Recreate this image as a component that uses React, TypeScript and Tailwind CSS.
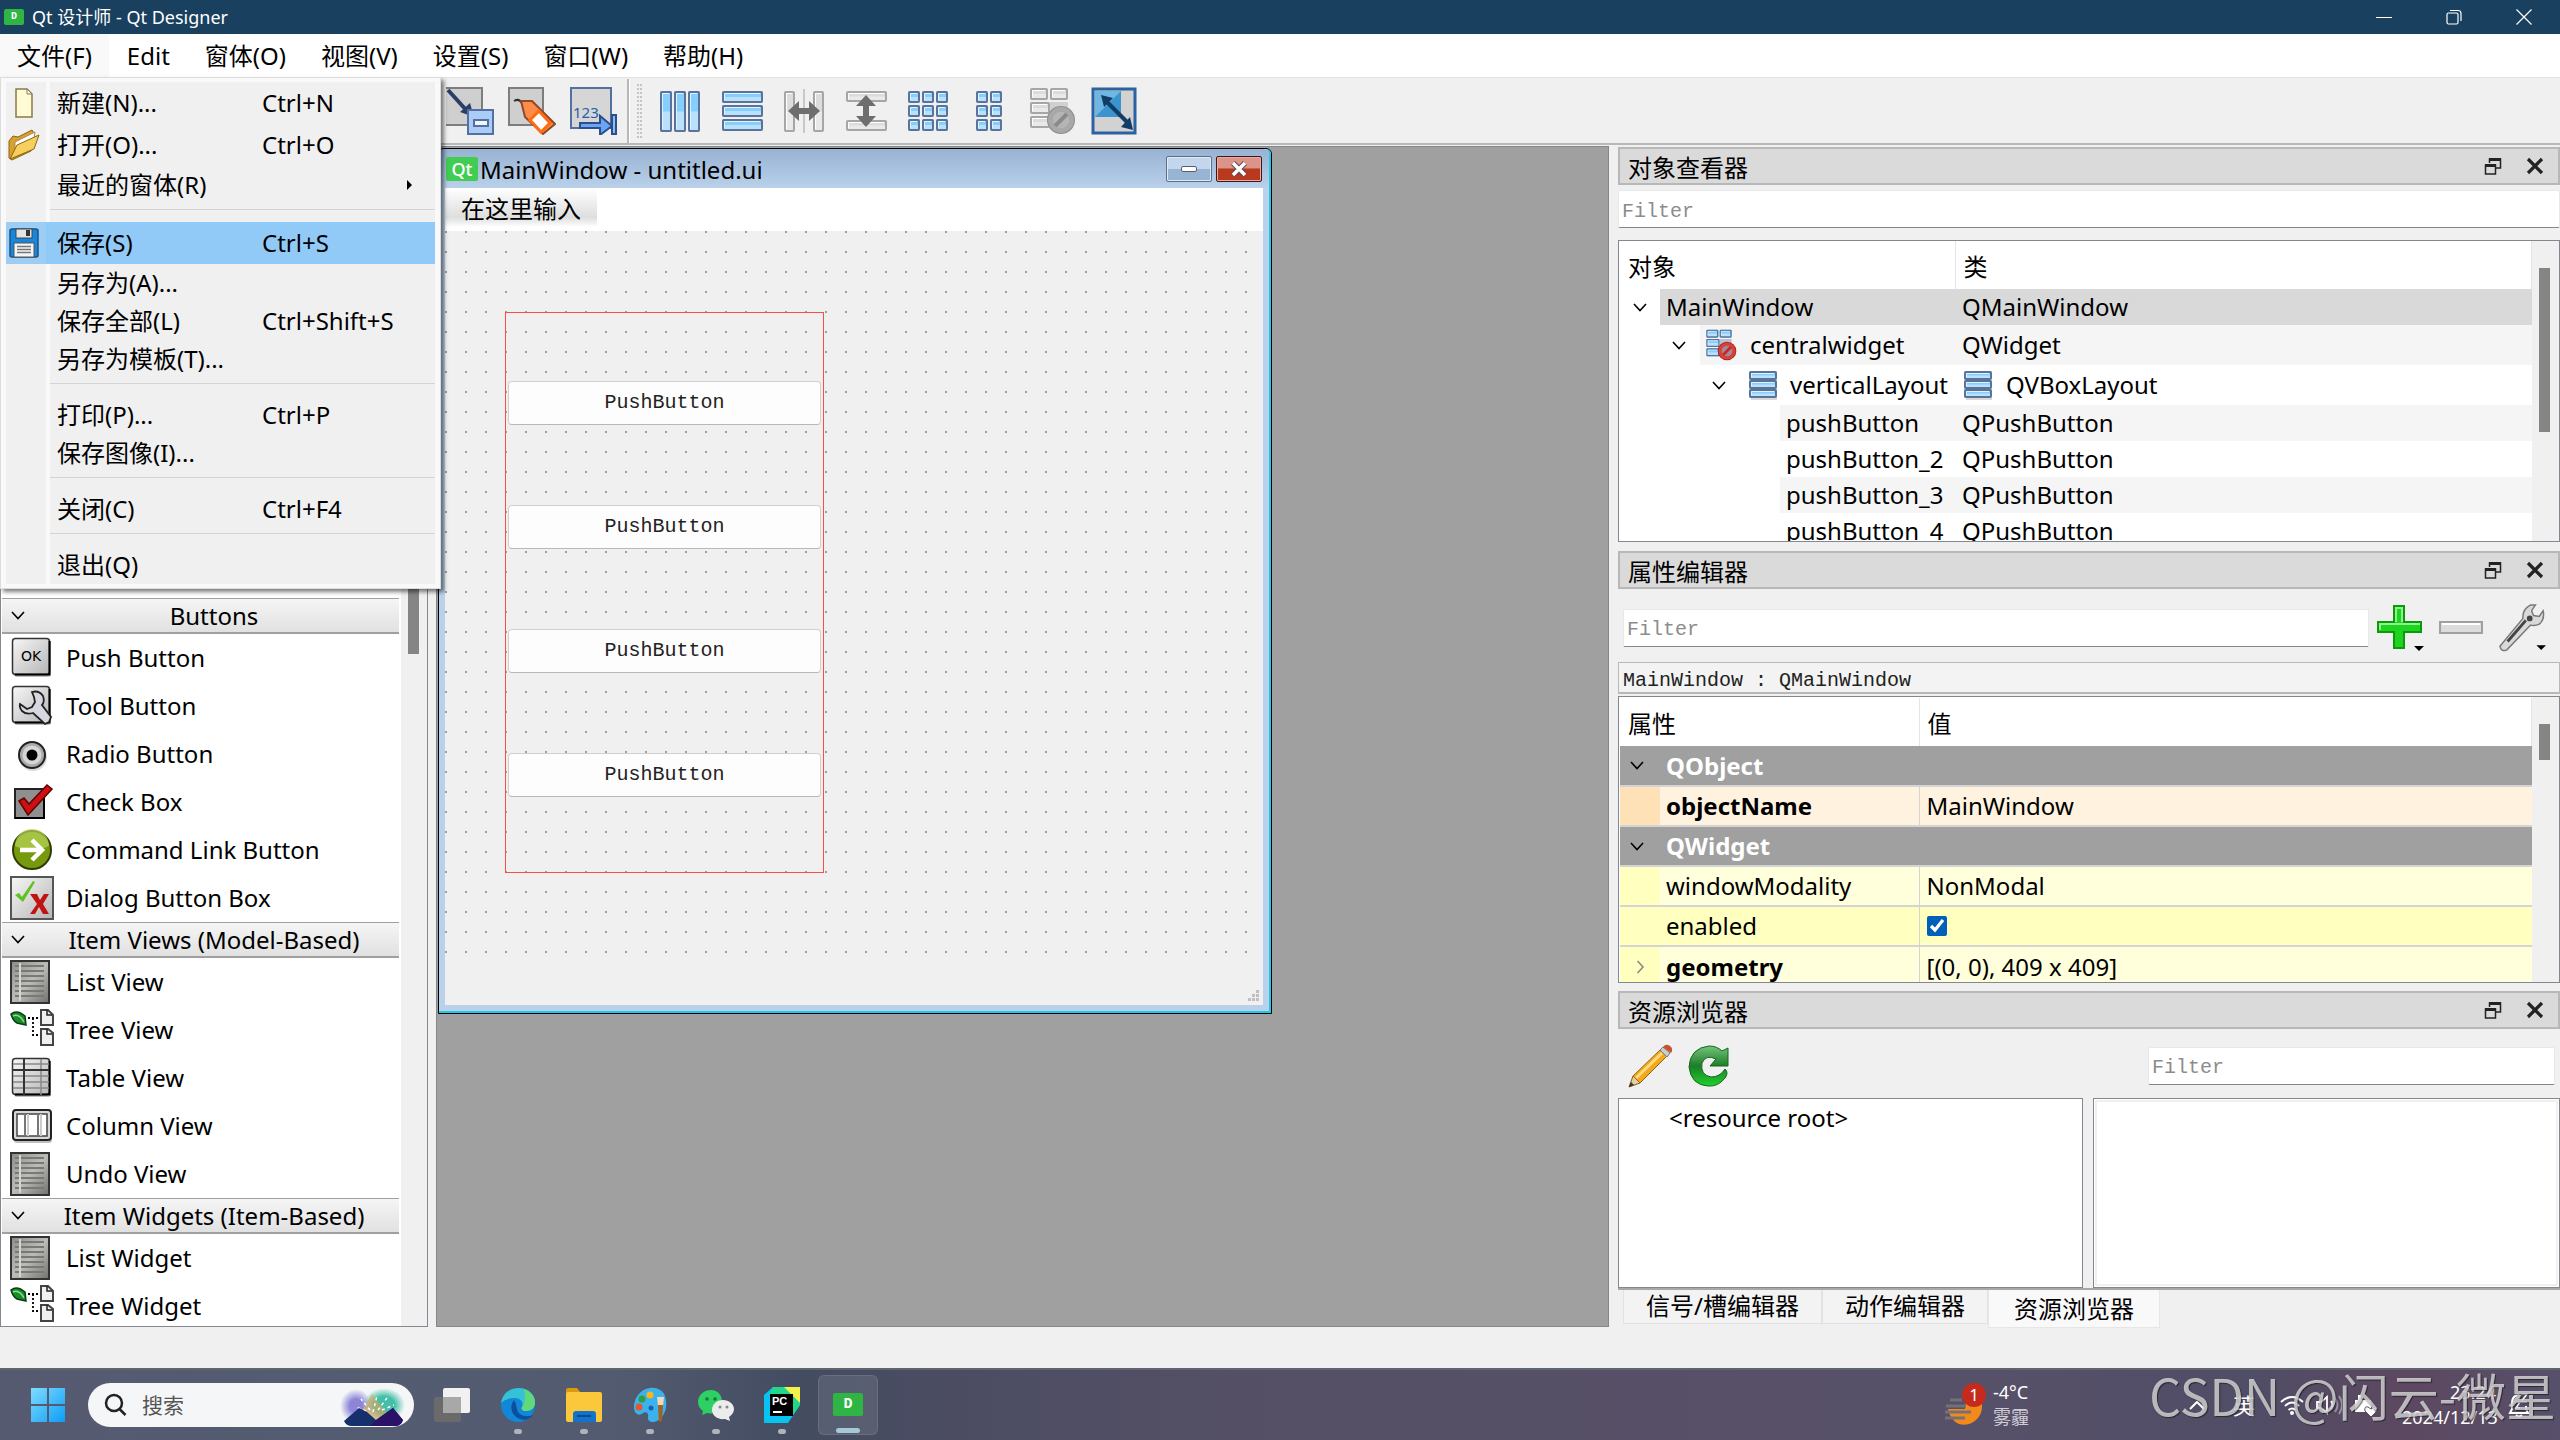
import { useState } from "react";
import type { ReactNode } from "react";

/* ---------- icons ---------- */

function Chevron({ className = "" }: { className?: string }) {
  return (
    <svg viewBox="0 0 14 9" className={`h-[9px] w-[14px] ${className}`} fill="none">
      <path d="M1 1l6 6.5L13 1" stroke="currentColor" strokeWidth="1.6" />
    </svg>
  );
}

function ChevronRight() {
  return (
    <svg viewBox="0 0 9 14" className="h-[14px] w-[9px]" fill="none">
      <path d="M1.5 1l5.5 6-5.5 6" stroke="#8a8a8a" strokeWidth="1.6" />
    </svg>
  );
}

interface BarProps {
  x: number;
  y: number;
  w: number;
  h: number;
  gray?: boolean;
}

function Bar({ x, y, w, h, gray }: BarProps) {
  return (
    <>
      <rect x={x} y={y} width={w} height={h} rx="1.5" fill={gray ? "#dcdcdc" : "#86cffc"} />
      <rect x={x} y={y + h / 2} width={w} height={h / 2} fill={gray ? "#e9e9e9" : "#b9e1fb"} />
      <rect x={x + 1} y={y + 1} width={w - 2} height={h - 2} rx="1" fill="none" stroke={gray ? "#a6a6a6" : "#5b7399"} strokeWidth="2" />
      <path d={`M${x + 2.5} ${y + h - 3}V${y + 2.5}H${x + w - 3}`} stroke={gray ? "#fff" : "#dff2ff"} strokeWidth="1" fill="none" />
    </>
  );
}

function Forbidden({ cx, cy, r, gray }: { cx: number; cy: number; r: number; gray?: boolean }) {
  const k = r * 0.42;
  return (
    <>
      <circle cx={cx} cy={cy} r={r} fill={gray ? "#8f8f8f" : "#a81c18"} />
      <circle cx={cx} cy={cy} r={r * 0.62} fill={gray ? "#b5b5b5" : "#a58a96"} />
      <circle cx={cx} cy={cy} r={r * 0.76} fill="none" stroke={gray ? "#a8a8a8" : "#d8403a"} strokeWidth={r * 0.32} />
      <path d={`M${cx - k} ${cy + k}L${cx + k} ${cy - k}`} stroke={gray ? "#8a8a8a" : "#c22a26"} strokeWidth={r * 0.3} />
    </>
  );
}

function VBoxIcon({ className = "size-8" }: { className?: string }) {
  return (
    <svg viewBox="0 0 32 32" className={className}>
      <rect x="4" y="28" width="26" height="3" fill="#000" opacity=".15" />
      <Bar x={2} y={2} w={28} h={9} />
      <Bar x={2} y={11} w={28} h={9} />
      <Bar x={2} y={20} w={28} h={9} />
    </svg>
  );
}

function BreakLayoutIcon({ className = "size-12", gray }: { className?: string; gray?: boolean }) {
  return (
    <svg viewBox="0 0 48 48" className={className}>
      <Bar x={2} y={1} w={18} h={12} gray={gray} />
      <Bar x={22} y={1} w={18} h={12} gray={gray} />
      <Bar x={2} y={15} w={20} h={12} gray={gray} />
      <Bar x={2} y={29} w={20} h={12} gray={gray} />
      <rect x="22" y="15" width="18" height="12" fill={gray ? "#d0d0d0" : "#b9c3d6"} />
      <Forbidden cx={33} cy={33} r={14} gray={gray} />
    </svg>
  );
}

const toolbarEdit: { name: string; icon: ReactNode }[] = [
  {
    name: "Edit Signals/Slots",
    icon: (
      <>
        <rect x="-6" y="1" width="42" height="37" fill="#cfcfcf" stroke="#7d7d7d" strokeWidth="2" />
        <path d="M2 3l20 22" stroke="#2b3f66" strokeWidth="4" />
        <path d="M28 30l-14-5 10-9z" fill="#2b3f66" />
        <rect x="22" y="23" width="25" height="24" fill="#a9cdf8" stroke="#54709f" strokeWidth="2" />
        <rect x="28" y="33" width="14" height="6" fill="#eef6ff" stroke="#54709f" strokeWidth="2" />
      </>
    ),
  },
  {
    name: "Edit Buddies",
    icon: (
      <>
        <rect x="1" y="1" width="34" height="37" fill="#cfcfcf" stroke="#7d7d7d" strokeWidth="2" />
        <path d="M6 14q5-3 8 2t3 10" fill="none" stroke="#333" strokeWidth="2" />
        <path d="M13 14h11l23 23-12 10-18-17z" fill="#ff8b4a" stroke="#8d4a24" strokeWidth="2" />
        <path d="M31 24l11 12-9 9-11-12z" fill="#fff" stroke="#ff6a13" strokeWidth="3" />
      </>
    ),
  },
  {
    name: "Edit Tab Order",
    icon: (
      <>
        <rect x="1" y="1" width="40" height="40" fill="#d6d6d6" stroke="#54709f" strokeWidth="2" />
        <text x="3" y="31" fontSize="15" fill="#1f5fae" fontFamily="Noto Sans">
          123
        </text>
        <path d="M10 36h20v-7l12 10-12 9v-7H10z" fill="#6ba4f2" stroke="#2a4f8c" strokeWidth="2" />
        <rect x="42" y="28" width="4" height="19" fill="#8dbcf8" stroke="#2a4f8c" strokeWidth="2" />
      </>
    ),
  },
];

const toolbarLayout: { name: string; icon: ReactNode }[] = [
  {
    name: "Lay Out Horizontally",
    icon: (
      <>
        <Bar x={4} y={4} w={12} h={41} />
        <Bar x={18} y={4} w={12} h={41} />
        <Bar x={32} y={4} w={12} h={41} />
      </>
    ),
  },
  {
    name: "Lay Out Vertically",
    icon: (
      <>
        <Bar x={4} y={4} w={41} h={12} />
        <Bar x={4} y={18} w={41} h={12} />
        <Bar x={4} y={32} w={41} h={12} />
      </>
    ),
  },
  {
    name: "Lay Out Horizontally in Splitter",
    icon: (
      <>
        <Bar x={4} y={4} w={11} h={41} gray />
        <Bar x={33} y={4} w={11} h={41} gray />
        <path d="M24 2v44" stroke="#c8c8c8" strokeWidth="2" />
        <path d="M8 24l11-10v7h10v-7l11 10-11 10v-7H19v7z" fill="#6e6e6e" />
      </>
    ),
  },
  {
    name: "Lay Out Vertically in Splitter",
    icon: (
      <>
        <Bar x={4} y={4} w={41} h={11} gray />
        <Bar x={4} y={33} w={41} h={11} gray />
        <path d="M24 8l10 11h-7v10h7L24 40 14 29h7V19h-7z" fill="#6e6e6e" />
      </>
    ),
  },
  {
    name: "Lay Out in a Grid",
    icon: (
      <>
        {[4, 18, 32].map((y) =>
          [4, 18, 32].map((x) => <Bar key={`${x}-${y}`} x={x} y={y} w={12} h={12} />),
        )}
      </>
    ),
  },
  {
    name: "Lay Out in a Form Layout",
    icon: (
      <>
        {[4, 18, 32].map((y) =>
          [10, 24].map((x) => <Bar key={`${x}-${y}`} x={x} y={y} w={12} h={12} />),
        )}
      </>
    ),
  },
  { name: "Break Layout", icon: <BreakLayoutIcon gray /> },
  {
    name: "Adjust Size",
    icon: (
      <>
        <rect x="3" y="2" width="42" height="44" fill="#d2d2d2" stroke="#2b62a0" strokeWidth="3" />
        <rect x="5" y="4" width="26" height="26" fill="#3c94cf" />
        <path d="M5 30L31 4H5z" fill="#6fb6e2" />
        <path d="M16 14l22 22" stroke="#123d66" strokeWidth="4" />
        <path d="M11 8l12 3-9 9zM43 43l-12-3 9-10z" fill="#123d66" />
      </>
    ),
  },
];

function FloppyIcon() {
  return (
    <svg viewBox="0 0 32 32" className="size-8">
      <rect x="2" y="2" width="28" height="28" rx="2" fill="#1787dd" stroke="#23527c" strokeWidth="1.5" />
      <rect x="8" y="2" width="16" height="9" fill="#e4e4e4" stroke="#444" />
      <rect x="18" y="3" width="4" height="6" fill="#333" />
      <rect x="6" y="16" width="20" height="14" fill="#f5f5f5" stroke="#555" />
      <path d="M9 19.500h14M9 22.500h14M9 25.500h14" stroke="#777" strokeWidth="1.500" />
    </svg>
  );
}

function NewFileIcon() {
  return (
    <svg viewBox="0 0 32 32" className="size-8">
      <path d="M8 2h11l5 5v23H8z" fill="#fffbd5" stroke="#8c7a4a" strokeWidth="1.5" />
      <path d="M19 2v5h5z" fill="#fff" stroke="#8c7a4a" />
    </svg>
  );
}

function OpenIcon() {
  return (
    <svg viewBox="0 0 32 32" className="size-8">
      <path d="M1 12l4-5 5 1 14-7 2 3-3 18-19 9-3-2z" fill="#d9a02c" stroke="#8a6416" />
      <path d="M7 13L27 3l-2 14-18 10z" fill="#fff" stroke="#a68b4a" />
      <path d="M2 30L9 16 31 6l-5 14z" fill="#f6cf5d" stroke="#8a6416" />
    </svg>
  );
}

type WidgetIconName =
  | "push"
  | "tool"
  | "radio"
  | "check"
  | "link"
  | "dialog"
  | "list"
  | "tree"
  | "table"
  | "column";

const key = (
  <>
    <rect x="4" y="4" width="37" height="37" rx="3" fill="#000" opacity=".25" />
    <rect x="2.5" y="2.500" width="37" height="36" rx="3" fill="url(#keyFill)" stroke="#333" strokeWidth="1.500" />
    <path d="M39.500 5v33.500H5" stroke="#000" strokeWidth="2" fill="none" />
  </>
);

const widgetIcons: Record<WidgetIconName, ReactNode> = {
  push: (
    <>
      {key}
      <text x="21" y="25" textAnchor="middle" fontSize="14" fontWeight="500" fontFamily="DejaVu Sans">
        OK
      </text>
    </>
  ),
  tool: (
    <>
      {key}
      <path
        d="M22 8q7-2 11 4 2 6-1 9l9 12-2 5-4 2-12-11q-7 2-11-2-3-4-2-7l7 5 5-2 3-5-1-5z"
        fill="#d7d7df"
        stroke="#222"
        strokeWidth="1.800"
      />
    </>
  ),
  radio: (
    <>
      <circle cx="23" cy="25" r="14" fill="#000" opacity=".15" />
      <circle cx="22" cy="23" r="13" fill="#aaa" stroke="#222" strokeWidth="2" />
      <circle cx="22" cy="23" r="9.500" fill="#e8e8e8" opacity=".7" />
      <circle cx="22" cy="23" r="5.500" fill="#000" />
    </>
  ),
  check: (
    <>
      <rect x="5" y="9" width="29" height="29" fill="#8f8f8f" stroke="#222" strokeWidth="2" />
      <path d="M34 9v29H5" stroke="#000" strokeWidth="2" fill="none" />
      <path d="M9 21l5-3 5 6L37 5l5 4-24 26z" fill="#cf1010" stroke="#5c0505" strokeWidth="1.500" />
    </>
  ),
  link: (
    <>
      <circle cx="22" cy="22" r="19" fill="#76990d" stroke="#2f3d05" strokeWidth="2" />
      <path d="M5 18a17 17 0 0134 0q-17 8-34 0z" fill="#b8d65a" opacity=".7" />
      <path d="M10 22h20M22 12l10 10-10 10" stroke="#fff" strokeWidth="4.500" fill="none" />
    </>
  ),
  dialog: (
    <>
      <rect x="1" y="1" width="42" height="42" fill="url(#keyFill)" stroke="#555" strokeWidth="2" />
      <path d="M5 19l4-2 3 4L23 5l2 1-12 20z" fill="#5cc41c" />
      <path d="M20 18h7l3 6 4-6h5l-6 10 6 10h-6l-4-7-4 7h-5l7-10z" fill="#c01414" />
    </>
  ),
  list: (
    <>
      <rect x="1" y="1" width="38" height="42" fill="url(#listFill)" stroke="#333" strokeWidth="2" />
      <path d="M5 6h29M5 11h29M5 16h29M5 21h29M5 26h29M5 31h29M5 36h29" stroke="#777a74" strokeWidth="1.800" />
      <path d="M10 3v38" stroke="#d5d5d0" strokeWidth="2" />
    </>
  ),
  tree: (
    <>
      <path d="M1 6q6-5 14 2l1 9q-5-1-9-2-4-2-6-9z" fill="#1b8a2a" stroke="#0c3d12" strokeWidth="1.500" />
      <path d="M3 8q6-3 11 6" stroke="#8de08f" strokeWidth="1.500" fill="none" />
      <path d="M18 10h10M23 10v17h5" stroke="#000" strokeWidth="1.800" strokeDasharray="2 2" fill="none" />
      <path d="M31 2h7l5 5v10H31zM31 21h7l5 4v12H31z" fill="#f0f0f0" stroke="#444" strokeWidth="2" />
      <path d="M37 2v5h5M37 21v5h5" stroke="#222" strokeWidth="1.500" fill="none" />
    </>
  ),
  table: (
    <>
      {key}
      <path d="M3 8h36M3 20h36M3 26h36M3 32h36M31 3v36" stroke="#888" strokeWidth="1.500" />
      <path d="M14 3v36M3 14h36" stroke="#333" strokeWidth="2" />
    </>
  ),
  column: (
    <>
      <rect x="4" y="9" width="38" height="30" rx="3" fill="#000" opacity=".25" />
      <rect x="3" y="6" width="38" height="30" rx="3" fill="#d8d8d8" stroke="#222" strokeWidth="2" />
      <rect x="7" y="10" width="30" height="22" fill="#fff" stroke="#444" strokeWidth="1.500" />
      <path d="M15 10v22M28 10v22" stroke="#777" strokeWidth="2" />
      <path d="M18 10v22M31 10v22" stroke="#ccc" strokeWidth="2" />
    </>
  ),
};

/* ---------- data ---------- */

const menus = ["文件(F)", "Edit", "窗体(O)", "视图(V)", "设置(S)", "窗口(W)", "帮助(H)"];

type MenuEntry = "sep" | { label: string; keys?: string; icon?: ReactNode; sub?: boolean; tall?: boolean };

const fileMenu: MenuEntry[] = [
  { label: "新建(N)...", keys: "Ctrl+N", icon: <NewFileIcon />, tall: true },
  { label: "打开(O)...", keys: "Ctrl+O", icon: <OpenIcon />, tall: true },
  { label: "最近的窗体(R)", sub: true },
  "sep",
  { label: "保存(S)", keys: "Ctrl+S", icon: <FloppyIcon />, tall: true },
  { label: "另存为(A)..." },
  { label: "保存全部(L)", keys: "Ctrl+Shift+S" },
  { label: "另存为模板(T)..." },
  "sep",
  { label: "打印(P)...", keys: "Ctrl+P" },
  { label: "保存图像(I)..." },
  "sep",
  { label: "关闭(C)", keys: "Ctrl+F4" },
  "sep",
  { label: "退出(Q)" },
];

const widgetBox: { title: string; items: { name: string; icon: WidgetIconName }[] }[] = [
  {
    title: "Buttons",
    items: [
      { name: "Push Button", icon: "push" },
      { name: "Tool Button", icon: "tool" },
      { name: "Radio Button", icon: "radio" },
      { name: "Check Box", icon: "check" },
      { name: "Command Link Button", icon: "link" },
      { name: "Dialog Button Box", icon: "dialog" },
    ],
  },
  {
    title: "Item Views (Model-Based)",
    items: [
      { name: "List View", icon: "list" },
      { name: "Tree View", icon: "tree" },
      { name: "Table View", icon: "table" },
      { name: "Column View", icon: "column" },
      { name: "Undo View", icon: "list" },
    ],
  },
  {
    title: "Item Widgets (Item-Based)",
    items: [
      { name: "List Widget", icon: "list" },
      { name: "Tree Widget", icon: "tree" },
    ],
  },
];

/* ---------- shell ---------- */

function TitleBar() {
  return (
    <header className="flex h-[34px] shrink-0 items-center bg-[#19405f] pr-7 pl-1 text-white">
      <span className="flex h-4 w-5 items-center justify-center rounded-xs bg-[#2fb543] font-mono text-[10px] leading-4 font-bold">
        D
      </span>
      <h1 className="ml-2 flex-1 text-[18px] leading-6">Qt 设计师 - Qt Designer</h1>
      <div className="flex items-center gap-[54px]">
        <button type="button" aria-label="Minimize">
          <svg viewBox="0 0 16 16" className="size-4">
            <path d="M0 8.500h16" stroke="#fff" />
          </svg>
        </button>
        <button type="button" aria-label="Restore">
          <svg viewBox="0 0 16 16" className="size-4" fill="none" stroke="#fff" strokeWidth="1.200">
            <rect x="1" y="4" width="11" height="11" rx="1.500" />
            <path d="M4 1.500h8q3 0 3 3V12" />
          </svg>
        </button>
        <button type="button" aria-label="Close">
          <svg viewBox="0 0 16 16" className="size-4">
            <path d="M.5.5l15 15M15.500.5l-15 15" stroke="#fff" strokeWidth="1.200" />
          </svg>
        </button>
      </div>
    </header>
  );
}

function FileMenu() {
  return (
    <ul
      role="menu"
      className="absolute top-full left-0 z-20 w-[441px] border border-[#dcdcdc] bg-[#f9f9f9] px-[5px] py-1 shadow-[3px_3px_4px_rgba(0,0,0,0.5)]"
    >
      {fileMenu.map((entry, i) => {
        if (entry === "sep") {
          return (
            <li key={i} role="separator" className="flex h-[18px]">
              <div className="w-10 bg-[#f0f0f0]" />
              <div className="ml-1 flex-1 bg-[#f0f0f0] pt-[5px]">
                <div className="h-px bg-[#d4d4d4]" />
              </div>
            </li>
          );
        }
        const active = entry.label === "保存(S)";
        return (
          <li key={i} role="none">
            <button
              type="button"
              role="menuitem"
              className={`flex w-full items-stretch text-left ${entry.tall ? "h-[42px]" : "h-[38px]"} ${
                active ? "bg-[#91c9f7]" : ""
              }`}
            >
              <span className={`flex w-10 items-center pl-[2px] ${active ? "bg-[#9ccdf5]" : "bg-[#f0f0f0]"}`}>
                {entry.icon}
              </span>
              <span className={`ml-1 flex flex-1 items-center pl-[7px] ${active ? "" : "bg-[#f0f0f0]"}`}>
                <span className="w-[205px] whitespace-nowrap">{entry.label}</span>
                <span className="flex-1">{entry.keys}</span>
                {entry.sub && (
                  <svg viewBox="0 0 5 10" className="mr-[23px] h-2.5 w-[5px]">
                    <path d="M0 0l5 5-5 5z" />
                  </svg>
                )}
              </span>
            </button>
          </li>
        );
      })}
    </ul>
  );
}

function MenuBar() {
  const [open, setOpen] = useState(true);
  return (
    <nav className="relative flex h-[43px] shrink-0 gap-px bg-white">
      {menus.map((m, i) => (
        <button
          key={m}
          type="button"
          onClick={() => i === 0 && setOpen(!open)}
          className={`px-[17px] ${i === 0 && open ? "bg-[#f9f9f9]" : ""}`}
        >
          {m}
        </button>
      ))}
      {open && <FileMenu />}
    </nav>
  );
}

function ToolButton({ name, children }: { name: string; children: ReactNode }) {
  return (
    <button type="button" aria-label={name} title={name}>
      <svg viewBox="0 0 48 48" className="size-12">
        {children}
      </svg>
    </button>
  );
}

function Toolbar() {
  return (
    <div className="flex h-[68px] shrink-0 border-t border-b-2 border-t-[#e3e3e3] border-b-[#b8b8b8] pt-px">
      <div className="flex w-[629px] items-center justify-end gap-[14px] border-r-2 border-[#b8b8b8] pr-[9px]">
        {toolbarEdit.map((t) => (
          <ToolButton key={t.name} name={t.name}>
            {t.icon}
          </ToolButton>
        ))}
      </div>
      <div className="flex flex-1 items-center gap-[14px] border-l border-white pl-[7px]">
        <div className="h-[54px] w-[5px] border-x-2 border-dotted border-[#c4c4c4]" />
        {toolbarLayout.map((t) => (
          <ToolButton key={t.name} name={t.name}>
            {t.icon}
          </ToolButton>
        ))}
      </div>
    </div>
  );
}

/* ---------- left dock ---------- */

function WidgetBox() {
  return (
    <aside className="flex w-[428px] shrink-0 flex-col overflow-hidden border border-[#828790] bg-white">
      <div className="flex min-h-0 flex-1">
        <div className="min-w-0 flex-1 overflow-hidden px-px pt-[451px]">
          {widgetBox.map((cat) => (
            <section key={cat.title}>
              <div className="mr-px flex h-9 items-center border-t border-b-2 border-[#a0a0a0] bg-linear-to-b from-[#f5f5f5] to-[#e1e1e1] pl-[9px]">
                <Chevron />
                <h2 className="flex-1 pl-1 text-center leading-8">{cat.title}</h2>
              </div>
              <ul>
                {cat.items.map((item) => (
                  <li key={item.name} className="flex h-12 items-center gap-3 pl-2">
                    <svg viewBox="0 0 44 44" className="size-11 shrink-0">
                      {widgetIcons[item.icon]}
                    </svg>
                    {item.name}
                  </li>
                ))}
              </ul>
            </section>
          ))}
        </div>
        <div className="w-[26px] bg-[#f0f0f0] pt-80 pl-[7px]">
          <div className="h-[187px] w-[11px] bg-[#858585]" />
        </div>
      </div>
    </aside>
  );
}

/* ---------- form canvas ---------- */

function FormWindow() {
  return (
    <div className="mt-px ml-px flex h-[866px] w-[834px] max-w-full flex-col rounded-t-md border border-black bg-[#b9d1ea]">
      <div className="flex flex-1 flex-col rounded-t-md border-r-2 border-b-2 border-[#1fc9e8]">
        <div className="flex h-[39px] items-center rounded-t-md bg-linear-to-b from-[#98b2d2] to-[#b9d1ea] pl-[7px]">
          <span className="flex h-6 w-8 items-center justify-center rounded-xs bg-[#41cd52] text-[18px] leading-6 font-medium text-white">
            Qt
          </span>
          <h2 className="flex-1 pt-[3px] pl-[2px] whitespace-nowrap">MainWindow - untitled.ui</h2>
          <div className="flex gap-1 pr-[7px]">
            <button
              type="button"
              aria-label="Minimize form"
              className="flex h-[26px] w-[46px] items-center justify-center rounded-xs border border-[#5b6f8c] bg-linear-to-b from-[#c3d6ec] from-50% to-[#98b4d3] to-50% inset-ring inset-ring-[#dfeaf6]"
            >
              <span className="h-[6px] w-4 rounded-xs border border-[#555f70] bg-white" />
            </button>
            <button
              type="button"
              aria-label="Close form"
              className="flex h-[26px] w-[46px] items-center justify-center rounded-xs border border-[#43141a] bg-linear-to-b from-[#dd9488] from-45% to-[#b9391f] to-50% inset-ring inset-ring-[#e6aca3]"
            >
              <svg viewBox="0 0 18 16" className="h-4 w-[18px]">
                <path d="M3 2l12 12M15 2L3 14" stroke="#5b4a55" strokeWidth="5.500" />
                <path d="M3 2l12 12M15 2L3 14" stroke="#fff" strokeWidth="3.500" />
              </svg>
            </button>
          </div>
        </div>
        <div className="mr-[6px] mb-[6px] ml-[6px] flex flex-1 flex-col bg-[#f0f0f0]">
          <div className="flex h-[43px] bg-white">
            <button
              type="button"
              className="mb-1 bg-linear-to-b from-white via-[#dedede] via-75% to-white px-4 pt-px leading-10"
            >
              在这里输入
            </button>
          </div>
          <div className="h-[722px] bg-[conic-gradient(at_2px_2px,transparent_75%,#a0a0a0_0)] bg-size-[20px_20px] pt-[81px] pl-[60px]">
            <div className="flex h-[561px] w-[319px] flex-col gap-20 border border-[#ff4a4a] px-[2px] pt-[68px]">
              {[1, 2, 3, 4].map((n) => (
                <button
                  key={n}
                  type="button"
                  className="h-11 rounded-sm border border-[#d0d0d0] border-b-[#b8b8b8] bg-[#fdfdfd] font-['Liberation_Mono','Noto_Sans_CJK_SC',monospace] text-xl text-[#222]"
                >
                  PushButton
                </button>
              ))}
            </div>
          </div>
          <div className="flex flex-1 items-end justify-end p-1">
            <svg viewBox="0 0 11 11" className="size-[11px]" fill="#bfbfbf">
              <path d="M8 0h3v3H8zM8 4h3v3H8zM8 8h3v3H8zM4 4h3v3H4zM4 8h3v3H4zM0 8h3v3H0z" />
            </svg>
          </div>
        </div>
      </div>
    </div>
  );
}

/* ---------- right docks ---------- */

function DockTitle({ title }: { title: string }) {
  return (
    <div className="flex h-[38px] shrink-0 items-center border-2 border-[#b8b8b8] bg-[#dadada] pr-[14px] pl-2">
      <h2 className="flex-1 pt-[3px] leading-8">{title}</h2>
      <button type="button" aria-label={`Float ${title}`}>
        <svg viewBox="0 0 18 18" className="size-[18px]" fill="none" stroke="#222">
          <path d="M5.500 6V2h11v9H12" strokeWidth="1.500" />
          <path d="M5 2.500h12" strokeWidth="3" />
          <rect x="1.500" y="8" width="10" height="9" strokeWidth="1.500" />
          <path d="M1 8.500h11" strokeWidth="3" />
        </svg>
      </button>
      <button type="button" aria-label={`Close ${title}`} className="ml-6">
        <svg viewBox="0 0 18 18" className="size-[18px]">
          <path d="M2 2l14 14M16 2L2 16" stroke="#222" strokeWidth="3.200" />
        </svg>
      </button>
    </div>
  );
}

function FilterInput({ label, className = "" }: { label: string; className?: string }) {
  return (
    <input
      type="text"
      aria-label={label}
      placeholder="Filter"
      className={`h-[38px] rounded-xs border border-[#e8e8e8] border-b-[#858585] bg-white px-[3px] pt-1 font-['Liberation_Mono','Noto_Sans_CJK_SC',monospace] text-xl outline-none placeholder:text-[#8c8c8c] ${className}`}
    />
  );
}

const pushRows = ["pushButton", "pushButton_2", "pushButton_3", "pushButton_4"];

function ObjectInspector() {
  return (
    <section>
      <DockTitle title="对象查看器" />
      <FilterInput label="Filter objects" className="mt-[5px] w-full" />
      <div className="mt-3 flex h-[302px] overflow-hidden border border-[#828790] bg-white">
        <div className="min-w-0 flex-1 overflow-hidden">
          <table className="w-full table-fixed border-collapse text-left whitespace-nowrap">
            <colgroup>
              <col className="w-[336px]" />
              <col />
            </colgroup>
            <thead>
              <tr className="h-12">
                <th className="border-r border-[#e5e5e5] p-0 pt-1 pl-[9px] font-normal">对象</th>
                <th className="border-r border-[#e5e5e5] p-0 pt-1 pl-2 font-normal">类</th>
              </tr>
            </thead>
            <tbody>
              <tr className="h-9">
                <td className="p-0">
                  <div className="flex h-9 items-center">
                    <span className="flex w-[41px] justify-center">
                      <Chevron />
                    </span>
                    <span className="flex-1 bg-[#d9d9d9] pl-[6px] leading-9">MainWindow</span>
                  </div>
                </td>
                <td className="bg-[#d9d9d9] p-0 pl-[7px] leading-9">QMainWindow</td>
              </tr>
              <tr className="h-10">
                <td className="p-0">
                  <div className="flex h-10 items-center">
                    <span className="flex w-[81px] justify-end pr-[14px]">
                      <Chevron />
                    </span>
                    <span className="flex flex-1 items-center gap-[13px] bg-[#f5f5f5] pl-[5px] leading-10">
                      <BreakLayoutIcon className="size-8" />
                      centralwidget
                    </span>
                  </div>
                </td>
                <td className="bg-[#f5f5f5] p-0 pl-[7px] leading-10">QWidget</td>
              </tr>
              <tr className="h-10">
                <td className="p-0">
                  <div className="flex h-10 items-center">
                    <span className="flex w-[121px] justify-end pr-[14px]">
                      <Chevron />
                    </span>
                    <span className="flex items-center gap-[11px] pl-[7px] leading-10">
                      <VBoxIcon />
                      verticalLayout
                    </span>
                  </div>
                </td>
                <td className="p-0 pl-[7px]">
                  <span className="flex items-center gap-3">
                    <VBoxIcon />
                    QVBoxLayout
                  </span>
                </td>
              </tr>
              {pushRows.map((name, i) => (
                <tr key={name} className="h-9">
                  <td className="p-0 pl-[161px]">
                    <div className={`pl-[6px] leading-9 ${i % 2 ? "" : "bg-[#f5f5f5]"}`}>{name}</div>
                  </td>
                  <td className={`p-0 pl-[7px] leading-9 ${i % 2 ? "" : "bg-[#f5f5f5]"}`}>QPushButton</td>
                </tr>
              ))}
            </tbody>
          </table>
        </div>
        <div className="w-[27px] bg-[#f0f0f0] pt-[27px] pl-[7px]">
          <div className="h-[164px] w-[11px] bg-[#858585]" />
        </div>
      </div>
    </section>
  );
}

function GroupRow({ name }: { name: string }) {
  return (
    <tr className="h-10 border-b-2 border-[#d4d4d4] bg-[#a0a0a0]">
      <th colSpan={2} className="p-0 text-left font-bold text-white">
        <span className="flex items-center">
          <span className="flex w-[46px] pl-[10px] text-black">
            <Chevron />
          </span>
          {name}
        </span>
      </th>
    </tr>
  );
}

function PropertyEditor() {
  const [enabled, setEnabled] = useState(true);
  return (
    <section className="mt-[9px]">
      <DockTitle title="属性编辑器" />
      <div className="flex h-[73px] items-center pt-[4px] pr-[14px] pl-[5px]">
        <FilterInput label="Filter properties" className="min-w-0 flex-1" />
        <button type="button" aria-label="Add property" className="ml-2">
          <svg viewBox="0 0 48 48" className="size-12">
            <path d="M17 2h10v16h17v10H27v16H17V28H1V18h16z" fill="#1fd41f" stroke="#0a9a0a" strokeWidth="2" />
            <path d="M19 18V4h6v14M3 26v-6h40" fill="none" stroke="#8df58d" strokeWidth="2" />
            <path d="M37 42h10l-5 5z" />
          </svg>
        </button>
        <button type="button" aria-label="Remove property" className="ml-[14px]">
          <svg viewBox="0 0 44 48" className="h-12 w-11">
            <rect x="1" y="18" width="42" height="11" fill="#dcdcdc" stroke="#a0a0a0" strokeWidth="2" />
            <path d="M3 20h38" stroke="#fff" strokeWidth="2" />
          </svg>
        </button>
        <button type="button" aria-label="Configure" className="ml-[15px]">
          <svg viewBox="0 0 50 50" className="size-12">
            <path
              d="M2 44l24-29q-1-9 8-14l5 0-4 6 2 5 6 1 4-6q2 9-4 14-4 2-9 1L9 48q-6 2-7-4z"
              fill="#d9d9d9"
              stroke="#777"
              strokeWidth="1.500"
            />
            <path d="M10 39l19-22" stroke="#444" strokeWidth="3" />
            <circle cx="33" cy="15" r="3" fill="#444" />
            <path d="M40 43h10l-5 5z" />
          </svg>
        </button>
      </div>
      <p className="h-8 border border-b-2 border-[#b8b8b8] bg-[#f3f3f3] pt-[6px] pl-1 font-['Liberation_Mono','Noto_Sans_CJK_SC',monospace] text-xl leading-6 text-[#222]">
        MainWindow : QMainWindow
      </p>
      <div className="mt-[2px] flex h-[287px] overflow-hidden border border-[#828790] bg-white">
        <div className="min-w-0 flex-1 overflow-hidden pt-px pl-px">
          <table className="w-full table-fixed border-collapse text-left whitespace-nowrap">
            <colgroup>
              <col className="w-[299px]" />
              <col />
            </colgroup>
            <thead>
              <tr className="h-12">
                <th className="border-r border-[#e5e5e5] p-0 pt-1 pl-2 font-normal">属性</th>
                <th className="border-r border-[#e5e5e5] p-0 pt-1 pl-2 font-normal">值</th>
              </tr>
            </thead>
            <tbody>
              <GroupRow name="QObject" />
              <tr className="h-10 border-b-2 border-[#d4d4d4] bg-[#fff2de]">
                <th className="border-r border-[#d4d4d4] bg-linear-to-r from-[#ffe1b8] from-[40px] to-[#fff2de] to-[40px] p-0 pl-[46px] font-bold">
                  objectName
                </th>
                <td className="p-0 pl-[7px]">MainWindow</td>
              </tr>
              <GroupRow name="QWidget" />
              <tr className="h-10 border-b-2 border-[#d4d4d4] bg-[#ffffdc]">
                <th className="border-r border-[#d4d4d4] bg-linear-to-r from-[#ffffbf] from-[40px] to-[#ffffdc] to-[40px] p-0 pl-[46px] font-normal">
                  windowModality
                </th>
                <td className="p-0 pl-[7px]">NonModal</td>
              </tr>
              <tr className="h-10 border-b-2 border-[#d4d4d4] bg-[#ffffbf]">
                <th className="border-r border-[#d4d4d4] p-0 pl-[46px] font-normal">
                  <label htmlFor="prop-enabled">enabled</label>
                </th>
                <td className="p-0 pl-[7px]">
                  <input
                    id="prop-enabled"
                    type="checkbox"
                    checked={enabled}
                    onChange={(e) => setEnabled(e.target.checked)}
                    className="block size-5 accent-[#005fb8]"
                  />
                </td>
              </tr>
              <tr className="h-10 bg-[#ffffdc]">
                <th className="border-r border-[#d4d4d4] bg-linear-to-r from-[#ffffbf] from-[40px] to-[#ffffdc] to-[40px] p-0 font-bold">
                  <span className="flex items-center">
                    <span className="flex w-[46px] pl-4">
                      <ChevronRight />
                    </span>
                    geometry
                  </span>
                </th>
                <td className="p-0 pl-[7px]">[(0, 0), 409 x 409]</td>
              </tr>
            </tbody>
          </table>
        </div>
        <div className="w-[27px] bg-[#f0f0f0] pt-[27px] pl-[7px]">
          <div className="h-9 w-[11px] bg-[#858585]" />
        </div>
      </div>
    </section>
  );
}

const dockTabs = ["信号/槽编辑器", "动作编辑器", "资源浏览器"];

function ResourceBrowser() {
  const [tab, setTab] = useState("资源浏览器");
  return (
    <section className="mt-2 flex min-h-0 flex-1 flex-col">
      <DockTitle title="资源浏览器" />
      <div className="flex h-[69px] shrink-0 items-center pt-1 pr-[5px] pl-[10px]">
        <button type="button" aria-label="Edit resources">
          <svg viewBox="0 0 44 44" className="size-11">
            <path d="M1 43l4-11 7 7z" fill="#e8cfa0" stroke="#7a5a20" />
            <path d="M1 43l2-5 3 3z" fill="#333" />
            <path d="M5 32L32 6l7 6-27 27z" fill="#f3a81f" stroke="#9a6510" />
            <path d="M8 34L34 9" stroke="#ffdc7a" strokeWidth="3" />
            <path d="M32 6l3-3 7 6-3 4z" fill="#ccc" stroke="#777" />
            <path d="M35 3q3-4 7-1t1 7z" fill="#c9532c" />
          </svg>
        </button>
        <button type="button" aria-label="Reload" className="ml-[14px]">
          <svg viewBox="0 0 44 44" className="size-11">
            <path
              d="M42 4v18H24l6-7q-10-5-14 4-2 12 9 14 9 0 14-8 4 4 0 9-7 9-17 8Q5 41 3 23 4 4 23 2q8 0 13 5z"
              fill="url(#reload)"
              stroke="#14661c"
            />
          </svg>
        </button>
        <FilterInput label="Filter resources" className="ml-auto w-[407px]" />
      </div>
      <div className="flex min-h-0 flex-1 gap-[10px]">
        <div className="flex-1 border border-[#828790] bg-white">
          <p className="pt-[3px] pl-[50px] leading-8">&lt;resource root&gt;</p>
        </div>
        <div className="flex-1 border border-[#828790] bg-white p-px">
          <div className="h-full border-2 border-[#f0f0f0]" />
        </div>
      </div>
      <div role="tablist" className="flex h-[39px] shrink-0 items-start border-t-2 border-[#a8a8a8] pl-[5px]">
        {dockTabs.map((t) => (
          <button
            key={t}
            type="button"
            role="tab"
            aria-selected={t === tab}
            onClick={() => setTab(t)}
            className={
              t === tab
                ? "h-[38px] border border-t-0 border-[#e6e6e6] bg-[#f9f9f9] px-[25px] leading-8"
                : "h-[34px] border border-t-0 border-[#e2e2e2] bg-[#f3f3f3] px-[22px] pb-[2px] leading-8"
            }
          >
            {t}
          </button>
        ))}
      </div>
    </section>
  );
}

/* ---------- taskbar ---------- */

const taskApps: { name: string; icon: ReactNode }[] = [
  {
    name: "Edge",
    icon: (
      <>
        <circle cx="18" cy="18" r="17" fill="#1287d8" />
        <path d="M1 16C3 5 11 1 19 1c10 0 16 7 16 14 0 6-4 9-9 9-4 0-5-2-4-4 2-4-1-9-7-9-7 0-12 3-14 5z" fill="#35c1d6" />
        <path d="M24 2c7 3 11 8 11 13 0 6-4 9-9 9-4 0-5-2-4-4 4-5 3-11 2-18z" fill="#5fd97a" />
        <path d="M14 13c-5 6-3 16 6 19 5 2 10 0 13-4-8 3-15 0-16-6-1-4-1-6-3-9z" fill="#0b4f9e" />
      </>
    ),
  },
  {
    name: "Explorer",
    icon: (
      <>
        <path d="M0 3q0-2 2-2h9l4 5H0z" fill="#d99a0c" />
        <rect x="0" y="5" width="36" height="30" rx="2" fill="#fbc83c" />
        <path d="M7 35V27q0-3 3-3h17q3 0 3 3v8z" fill="#1272cc" />
        <path d="M11 29h14" stroke="#0a4b8e" strokeWidth="2" />
      </>
    ),
  },
  {
    name: "Paint",
    icon: (
      <>
        <path d="M18 1C8 2 1 12 2 22c1 6 6 7 9 4 3-2 6 0 5 4-1 5 5 6 9 4 9-5 11-16 8-25-2-6-9-9-15-8z" fill="#3bb2ee" />
        <circle cx="10" cy="12" r="3.500" fill="#2e9e3f" />
        <circle cx="18" cy="8" r="3.500" fill="#f6b81c" />
        <circle cx="7" cy="20" r="3.500" fill="#e4572e" />
        <circle cx="19" cy="21" r="2.500" fill="#1c5fa8" />
        <path d="M25 10h7l-1 9h-5z" fill="#f1d9b5" />
        <path d="M26 18h5l-1 16-3 1z" fill="#a5601d" />
      </>
    ),
  },
  {
    name: "WeChat",
    icon: (
      <>
        <path d="M13 3C5 3 0 9 0 15c0 4 2 7 5 9l-1 4 5-2c10 2 15-4 15-11S20 3 13 3z" fill="#2fd063" />
        <circle cx="9" cy="12" r="1.800" fill="#137a35" />
        <circle cx="17" cy="12" r="1.800" fill="#137a35" />
        <path d="M25 13c-7 0-11 5-11 10s5 10 13 9l5 2-1-4c3-2 5-5 5-8 0-5-5-9-11-9z" fill="#ececec" />
        <circle cx="22" cy="20" r="1.500" fill="#888" />
        <circle cx="29" cy="20" r="1.500" fill="#888" />
      </>
    ),
  },
  {
    name: "PyCharm",
    icon: (
      <>
        <path d="M9 0h27v18L24 36H0V8z" fill="#07c3f2" />
        <path d="M9 0h27v18l-8 11V8H5z" fill="#21d789" />
        <path d="M20 0h16v16z" fill="#f4f24a" />
        <rect x="6" y="7" width="23" height="22" fill="#000" />
        <text x="8" y="18" fontSize="11" fontWeight="700" fill="#fff" fontFamily="Liberation Sans">
          PC
        </text>
        <path d="M9 25h9" stroke="#fff" strokeWidth="2" />
      </>
    ),
  },
];

function Taskbar() {
  return (
    <footer className="relative flex h-[72px] shrink-0 items-center overflow-hidden border-t-2 border-[#60646f] bg-[linear-gradient(90deg,#565a70_0%,#535c70_12%,#525b70_24%,#434c60_31%,#4a4c62_36%,#565066_50%,#575069_78%,#504d66_88%,#5c4860_94%,#57506a_100%)] text-white">
      <div className="flex h-full items-center pl-[30px]">
        <button type="button" aria-label="Start">
          <svg viewBox="0 0 36 36" className="size-9">
            <path d="M1 1h16v16H1zM19 1h16v16H19zM1 19h16v16H1zM19 19h16v16H19z" fill="url(#start)" />
          </svg>
        </button>
        <label className="ml-[22px] flex h-11 w-[326px] items-center overflow-hidden rounded-full bg-[#f5f6f7] pr-2 pl-4">
          <svg viewBox="0 0 24 24" className="size-6 shrink-0" fill="none" stroke="#222" strokeWidth="2.500">
            <circle cx="10" cy="10" r="8" />
            <path d="M15.500 16l6 6" />
          </svg>
          <input
            type="search"
            aria-label="搜索"
            placeholder="搜索"
            className="ml-[14px] min-w-0 flex-1 bg-transparent text-[21px] outline-none placeholder:text-[#555]"
          />
          <svg viewBox="0 0 66 38" className="mt-1 h-[38px] w-[66px] shrink-0">
            <ellipse cx="16" cy="18" rx="16" ry="17" fill="url(#glowViolet)" />
            <ellipse cx="44" cy="17" rx="21" ry="17" fill="url(#glowTeal)" />
            <path d="M14 36L32 6l22 28z" fill="#e2a45a" opacity=".6" />
            <path d="M33 24l4-16M38 22l9-12M30 22l-9-11M42 22l12-5M26 23l-10-4" stroke="#fff" strokeWidth="1.500" strokeDasharray="3 3" />
            <path d="M4 33l15-13 8 4 9 8 17-12 10 12q-2 6-8 6H12q-6 0-8-5z" fill="#16306e" />
            <path d="M36 32l17-12 10 12q-2 6-8 6H30z" fill="#2c1266" />
          </svg>
        </label>
        <div className="ml-5 flex items-center">
          <button type="button" aria-label="Task view">
            <svg viewBox="0 0 36 36" className="size-9">
              <rect x="0" y="10" width="27" height="25" rx="2" fill="#6a6a6a" />
              <rect x="9" y="1" width="27" height="25" rx="2" fill="#f1f1f1" />
              <path d="M9 10h18v16H9z" fill="#a8a8a8" />
            </svg>
          </button>
          {taskApps.map((app) => (
            <button key={app.name} type="button" aria-label={app.name} className="ml-[30px] flex flex-col items-center pt-[10px]">
              <svg viewBox="0 0 36 36" className="size-9">
                {app.icon}
              </svg>
              <span className="mt-[6px] h-[5px] w-2 rounded-full bg-[#b0b3bd]" />
            </button>
          ))}
          <button
            type="button"
            aria-label="Qt Designer"
            className="ml-[18px] flex h-[60px] w-[60px] flex-col items-center rounded-md border border-white/10 bg-white/10 pt-[17px]"
          >
            <span className="flex h-[23px] w-[30px] items-center justify-center rounded-xs bg-[#2fb543] font-mono text-[15px] leading-5 font-bold">
              D
            </span>
            <span className="mt-3 h-[5px] w-6 shrink-0 rounded-full bg-[#a5c9d6]" />
          </button>
        </div>
      </div>
      <div className="ml-auto flex items-center pr-[30px]">
        <svg viewBox="0 0 42 44" className="h-11 w-[42px]">
          <path d="M3 26h17q0-8 5-10h11q3 12-3 19-8 9-19 6-9-4-11-15z" fill="#f28a1a" />
          <path d="M5 17h12M1 23h20M0 29h26M0 35h20" stroke="#74707a" strokeWidth="3" />
          <circle cx="29" cy="12" r="12" fill="#c42b1c" />
          <text x="29" y="18" textAnchor="middle" fontSize="17" fill="#fff" fontFamily="Noto Sans">
            1
          </text>
        </svg>
        <div className="ml-[6px] text-[18px] leading-[25px]">
          <p>-4°C</p>
          <p className="text-[#cfccd6]">雾霾</p>
        </div>
        <div className="ml-[160px] flex items-center">
          <svg viewBox="0 0 16 10" className="h-2.5 w-4" fill="none" stroke="#fff" strokeWidth="2">
            <path d="M1 9l7-7 7 7" />
          </svg>
          <span className="ml-[28px] text-[22px]">英</span>
          <svg viewBox="0 0 24 20" className="ml-[25px] h-5 w-6" fill="none" stroke="#fff" strokeWidth="2">
            <path d="M1 7q11-10 22 0M5 11q7-7 14 0M8.500 15q3.500-3 7 0" />
            <circle cx="12" cy="18" r="1" />
          </svg>
          <svg viewBox="0 0 26 20" className="ml-3 h-5 w-[26px]" fill="none" stroke="#fff" strokeWidth="1.800">
            <path d="M1 7h4l6-5v16l-6-5H1z" />
            <path d="M15 6q3 4 0 8" />
            <path d="M19 3q5 7 0 14M23 1q6 9 0 18" opacity=".4" />
          </svg>
          <svg viewBox="0 0 26 26" className="ml-[10px] size-[26px]" fill="#fff">
            <path d="M3 8h16v12H3zM6 3h3v5H6z" />
            <path d="M19 25l-6-6q-1-5 3-4l3 2 3-2q4-1 3 4z" stroke="#5a4a62" />
          </svg>
          <div className="ml-6 w-[94px] text-right text-[18px] leading-[25px] whitespace-nowrap">
            <p>23:24</p>
            <p>2024/12/13</p>
          </div>
          <svg viewBox="0 0 22 26" className="ml-3 h-[26px] w-[22px]" fill="none" stroke="#fff" strokeWidth="2">
            <path d="M9 3q-5 2-5 8v6l-2 4h18l-2-4v-3M8 23q3 3 6 0" />
            <path d="M13 2h6l-6 8h6M8 10h4l-4 6h4" strokeWidth="1.500" />
          </svg>
        </div>
      </div>
      <p className="pointer-events-none absolute right-1 bottom-0 font-['Noto_Sans_CJK_SC',sans-serif] text-[50px] leading-[92px] whitespace-nowrap text-[#dcdcdc]/80 text-shadow-[1px_1px_1px_rgba(0,0,0,0.5)]">
        CSDN @闪云-微星
      </p>
    </footer>
  );
}

export default function App() {
  return (
    <div className="flex h-screen flex-col overflow-hidden bg-[#f0f0f0] font-['Noto_Sans','Noto_Sans_CJK_SC',sans-serif] text-2xl leading-8 text-black">
      {/* shared gradients */}
      <svg className="absolute size-0" aria-hidden="true">
        <defs>
          <linearGradient id="keyFill" x1="0" y1="0" x2="1" y2="1">
            <stop offset="0" stopColor="#f7f7f7" />
            <stop offset="1" stopColor="#b5b5b5" />
          </linearGradient>
          <linearGradient id="listFill" x1="0" y1="0" x2="1" y2="1">
            <stop offset="0" stopColor="#8c8c8a" />
            <stop offset=".5" stopColor="#bcbcb8" />
            <stop offset="1" stopColor="#70726c" />
          </linearGradient>
          <linearGradient id="reload" x1="0" y1="0" x2="0" y2="1">
            <stop offset="0" stopColor="#74c47c" />
            <stop offset=".5" stopColor="#1d7d28" />
            <stop offset="1" stopColor="#1fd32a" />
          </linearGradient>
          <linearGradient id="start" x1="0" y1="0" x2="1" y2="1">
            <stop offset="0" stopColor="#7fdcff" />
            <stop offset="1" stopColor="#0d9df5" />
          </linearGradient>
          <radialGradient id="glowViolet">
            <stop offset=".4" stopColor="#8d86d8" />
            <stop offset="1" stopColor="#8d86d8" stopOpacity="0" />
          </radialGradient>
          <radialGradient id="glowTeal">
            <stop offset=".5" stopColor="#43bfa8" />
            <stop offset="1" stopColor="#43bfa8" stopOpacity="0" />
          </radialGradient>
        </defs>
      </svg>

      <TitleBar />
      <MenuBar />
      <Toolbar />

      <main className="mt-px mb-[41px] flex min-h-0 flex-1">
        <WidgetBox />
        <div className="ml-2 min-w-0 flex-1 overflow-hidden border border-[#828790] bg-[#a0a0a0]">
          <FormWindow />
        </div>
        <div className="mt-px ml-[9px] flex w-[942px] shrink-0 flex-col">
          <ObjectInspector />
          <PropertyEditor />
          <ResourceBrowser />
        </div>
      </main>

      <Taskbar />
    </div>
  );
}
